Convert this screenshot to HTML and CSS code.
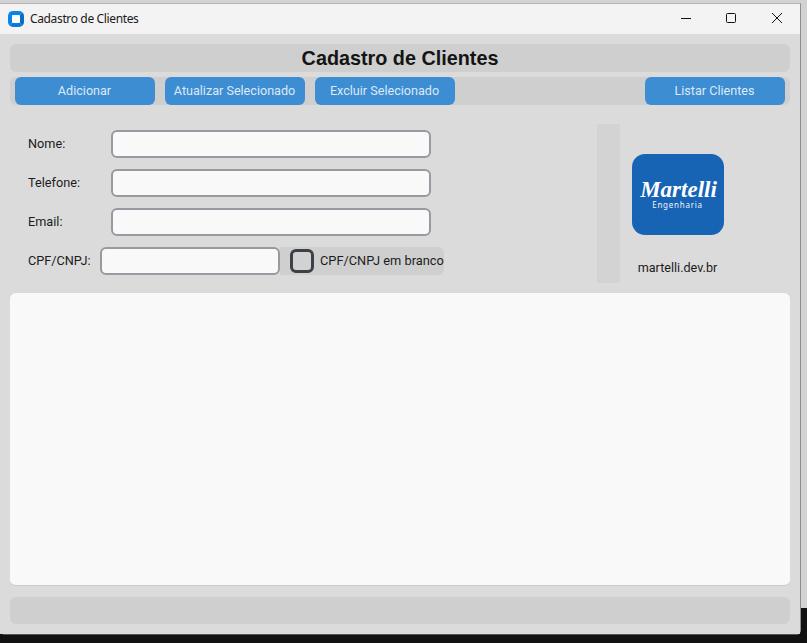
FILE: index.html
```html
<!DOCTYPE html>
<html lang="pt-BR">
<head>
<meta charset="utf-8">
<title>Cadastro de Clientes</title>
<link rel="stylesheet" href="styles.css">
</head>
<body>
<div class="desktop">
  <div class="backdrop"></div>
  <div class="window">
    <header class="titlebar">
      <div class="app-icon"></div>
      <span class="app-title">Cadastro de Clientes</span>
      <div class="controls">
        <svg class="ctl" width="46" height="30" viewBox="0 0 46 30"><path d="M19 14.5h10" stroke="#111" fill="none"/></svg>
        <svg class="ctl" width="46" height="30" viewBox="0 0 46 30"><rect x="18.5" y="9.5" width="9" height="9" rx="1" stroke="#111" fill="none"/></svg>
        <svg class="ctl" width="46" height="30" viewBox="0 0 46 30"><path d="M18 9l10 10M28 9l-10 10" stroke="#111" fill="none"/></svg>
      </div>
    </header>
    <main class="content">
      <h1 class="heading">Cadastro de Clientes</h1>
      <div class="toolbar">
        <button class="btn">Adicionar</button>
        <button class="btn">Atualizar Selecionado</button>
        <button class="btn">Excluir Selecionado</button>
        <button class="btn btn-end">Listar Clientes</button>
      </div>
      <section class="form-area">
        <div class="fields">
          <div class="row"><label class="label">Nome:</label><input class="input" type="text"></div>
          <div class="row"><label class="label">Telefone:</label><input class="input" type="text"></div>
          <div class="row"><label class="label">Email:</label><input class="input" type="text"></div>
          <div class="row row-cpf">
            <label class="label label-cpf">CPF/CNPJ:</label>
            <input class="input input-cpf" type="text">
            <div class="check-group"><span class="checkbox"></span><span class="check-text">CPF/CNPJ em branco</span></div>
          </div>
        </div>
        <div class="divider"></div>
        <aside class="brand">
          <div class="logo"><span class="logo-name">Martelli</span><span class="logo-sub">Engenharia</span></div>
          <span class="site">martelli.dev.br</span>
        </aside>
      </section>
      <div class="table-area"></div>
      <div class="status"></div>
    </main>
  </div>
</div>
</body>
</html>
```

FILE: styles.css
```css
* { box-sizing: border-box; }
html, body { margin: 0; padding: 0; }
body { width: 807px; height: 643px; overflow: hidden; background: #111111; }
.desktop { position: relative; width: 807px; height: 643px; }
.backdrop { position: absolute; left: 0; top: 0; width: 807px; height: 608px; background: #d2d2d2; }
.window {
  position: absolute; left: 0; top: 3px; width: 801px; height: 632px;
  display: flex; flex-direction: column;
  border-top: 1px solid #b4b4b4; border-right: 1px solid #8e8e8e; border-bottom: 1px solid #555555;
  border-radius: 0 0 5px 5px;
  background: #dbdbdb;
}
.titlebar { height: 30px; flex: none; display: flex; align-items: center; background: #f3f3f3; padding-left: 8px; }
.app-icon { width: 16px; height: 16px; border-radius: 5px; background: #fff; border: 4px solid #0a84e8; border-right-color: #0a6cc4; border-bottom-color: #0a78d8; }
.app-title { margin-left: 6px; font: 12px/16px "Noto Sans", "Open Sans", sans-serif; color: #1a1a1a; letter-spacing: -0.36px; }
.controls { margin-left: auto; display: flex; }
.ctl { display: block; width: 46px; height: 30px; }
.content { flex: 1; display: flex; flex-direction: column; padding: 10px; border-radius: 6px 6px 0 0; background: #dbdbdb; }
.heading { margin: 0; height: 28px; flex: none; background: #cfcfcf; border-radius: 6px; text-align: center; font: bold 19.8px/28px "Liberation Sans", Arial, sans-serif; color: #141414; }
.toolbar { margin-top: 5px; height: 28px; flex: none; display: flex; gap: 10px; padding: 0 5px; background: #cfcfcf; border-radius: 6px; }
.btn { width: 140px; height: 28px; border: 0; padding: 0 1px 0 0; border-radius: 6px; background: #3d8dd3; color: #dce9f8; font: 12.6px/28px Roboto, sans-serif; }
.btn-end { margin-left: auto; }
.form-area { margin-top: 19px; height: 159px; flex: none; display: flex; }
.fields { width: 587px; flex: none; display: flex; flex-direction: column; gap: 11px; padding-top: 6px; }
.row { display: flex; align-items: center; height: 28px; }
.label { width: 101px; padding-left: 18px; flex: none; font: 12.7px/16px Roboto, sans-serif; color: #1c1c1c; }
.label-cpf { width: 90px; }
.input { width: 320px; height: 28px; background: #f9f9f9; border: 2px solid #979aa0; border-radius: 6px; padding: 0 8px; outline: none; flex: none; }
.input-cpf { width: 180px; }
.check-group { width: 164px; height: 28px; display: flex; align-items: center; background: #cfcfcf; border-radius: 0 6px 6px 0; padding-left: 10px; flex: none; }
.checkbox { width: 24px; height: 24px; flex: none; border: 3px solid #3b4147; border-radius: 6px; background: #d2d2d2; }
.check-text { margin-left: 6px; white-space: nowrap; font: 12.8px/16px Roboto, sans-serif; color: #1c1c1c; }
.divider { width: 23px; height: 159px; flex: none; background: #d3d3d3; }
.brand { width: 115px; flex: none; display: flex; flex-direction: column; align-items: center; padding-top: 30px; }
.logo { width: 92px; height: 81px; background: #1763b4; border-radius: 13px; display: flex; flex-direction: column; align-items: center; justify-content: center; color: #fff; padding-bottom: 1px; }
.logo-name { font: italic bold 23px/21px "Liberation Serif", serif; margin-left: 2px; }
.logo-sub { font: 8px/9px "Noto Sans", sans-serif; letter-spacing: 0.75px; color: #f0f5fb; }
.site { margin-top: 25px; font: 12.6px/16px Roboto, sans-serif; color: #1c1c1c; }
.table-area { margin-top: 10px; height: 293px; flex: none; background: #f9f9f9; border-radius: 6px; border-bottom: 1px solid #cccccc; }
.status { margin-top: 11px; height: 27px; flex: none; background: #cfcfcf; border-radius: 6px; }
```
